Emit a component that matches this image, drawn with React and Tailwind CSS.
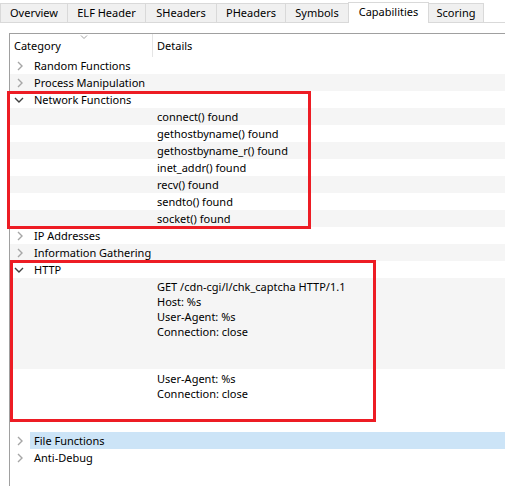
import React from "react";

const tabs = [
  { label: "Overview", w: "w-[68px]" },
  { label: "ELF Header", w: "w-[78px]" },
  { label: "SHeaders", w: "w-[71px]" },
  { label: "PHeaders", w: "w-[69px]" },
  { label: "Symbols", w: "w-[63px]" },
  { label: "Capabilities", w: "w-[81px]", active: true },
  { label: "Scoring", w: "w-[55px]" },
];

// type: "cat" = category row, "det" = detail row
const rows = [
  { type: "cat", text: "Random Functions" },
  { type: "cat", text: "Process Manipulation" },
  { type: "cat", text: "Network Functions", open: true },
  { type: "det", lines: ["connect() found"] },
  { type: "det", lines: ["gethostbyname() found"] },
  { type: "det", lines: ["gethostbyname_r() found"] },
  { type: "det", lines: ["inet_addr() found"] },
  { type: "det", lines: ["recv() found"] },
  { type: "det", lines: ["sendto() found"] },
  { type: "det", lines: ["socket() found"] },
  { type: "cat", text: "IP Addresses" },
  { type: "cat", text: "Information Gathering" },
  { type: "cat", text: "HTTP", open: true },
  {
    type: "det",
    h: "h-[91px] pt-[1px]",
    lines: ["GET /cdn-cgi/l/chk_captcha HTTP/1.1", "Host: %s", "User-Agent: %s", "Connection: close"],
  },
  { type: "det", h: "h-[63px] pt-[2px]", lines: ["User-Agent: %s", "Connection: close"] },
  { type: "cat", text: "File Functions", selected: true },
  { type: "cat", text: "Anti-Debug" },
];

const Chevron = ({ open }) =>
  open ? (
    <svg width="10" height="6" viewBox="0 0 10 6" className="ml-[4px]">
      <path d="M1 1 L5 5 L9 1" fill="none" stroke="#404040" strokeWidth="1.4" />
    </svg>
  ) : (
    <svg width="6" height="10" viewBox="0 0 6 10" className="ml-[7px]">
      <path d="M1 1 L5 5 L1 9" fill="none" stroke="#a6a6a6" strokeWidth="1.4" />
    </svg>
  );

export default function App() {
  return (
    <div
      className="relative w-[505px] h-[486px] overflow-hidden bg-white text-[11px] text-black"
      style={{ fontFamily: '"Noto Sans", "Open Sans", sans-serif' }}
    >
      {/* Tab bar */}
      <div className="flex items-end h-[23px] border-b border-[#d9d9d9]">
        {tabs.map((t, i) =>
          t.active ? (
            <div
              key={t.label}
              className={`${t.w} h-[21px] -mb-px -ml-px flex items-center justify-center bg-white border border-b-0 border-[#d9d9d9] pb-[2px]`}
            >
              {t.label}
            </div>
          ) : (
            <div
              key={t.label}
              className={`${t.w} h-[19px] flex items-center justify-center bg-[#f0f0f0] border-t border-r border-[#d9d9d9] ${
                i === 0 ? "border-l" : ""
              }`}
            >
              {t.label}
            </div>
          )
        )}
      </div>

      {/* Tree view */}
      <div className="mt-[10px] ml-[9px] h-[500px] border-l border-t border-[#a0a0a0]">
        {/* Header */}
        <div className="relative grid grid-cols-[143px_1fr] h-[23px]">
          <div className="flex items-center pl-[4px] pt-px border-r border-[#e5e5e5]">Category</div>
          <div className="flex items-center pl-[4px] pt-px">Details</div>
          <svg width="8" height="4" viewBox="0 0 8 4" className="absolute left-[70px] top-[1px]">
            <path d="M1 0.5 L4 3.5 L7 0.5" fill="none" stroke="#a0a0a0" strokeWidth="1" />
          </svg>
        </div>

        {/* Rows */}
        {rows.map((r, i) => {
          const bg = i % 2 === 1 ? "bg-[#f5f5f5]" : "bg-white";
          if (r.type === "cat") {
            return (
              <div key={i} className={`flex h-[17px] ${r.selected ? "bg-white" : bg}`}>
                <div className="w-[20px] flex items-center">
                  <Chevron open={r.open} />
                </div>
                <div
                  className={`flex-1 flex items-center pl-[4px] leading-none ${
                    r.selected ? "bg-[#cce4f7]" : ""
                  }`}
                >
                  {r.text}
                </div>
              </div>
            );
          }
          return (
            <div key={i} className={`grid grid-cols-[143px_1fr] ${r.h || "h-[17px] items-center"} ${bg}`}>
              <div />
              <div className="pl-[4px] leading-[15px]">
                {r.lines.map((l) => (
                  <div key={l}>{l}</div>
                ))}
              </div>
            </div>
          );
        })}
      </div>

      {/* Red annotation boxes */}
      <div className="absolute left-[7px] top-[91px] w-[304px] h-[138px] border-[3px] border-[#ed1c24]" />
      <div className="absolute left-[10px] top-[260px] w-[366px] h-[162px] border-[3px] border-[#ed1c24]" />
    </div>
  );
}
